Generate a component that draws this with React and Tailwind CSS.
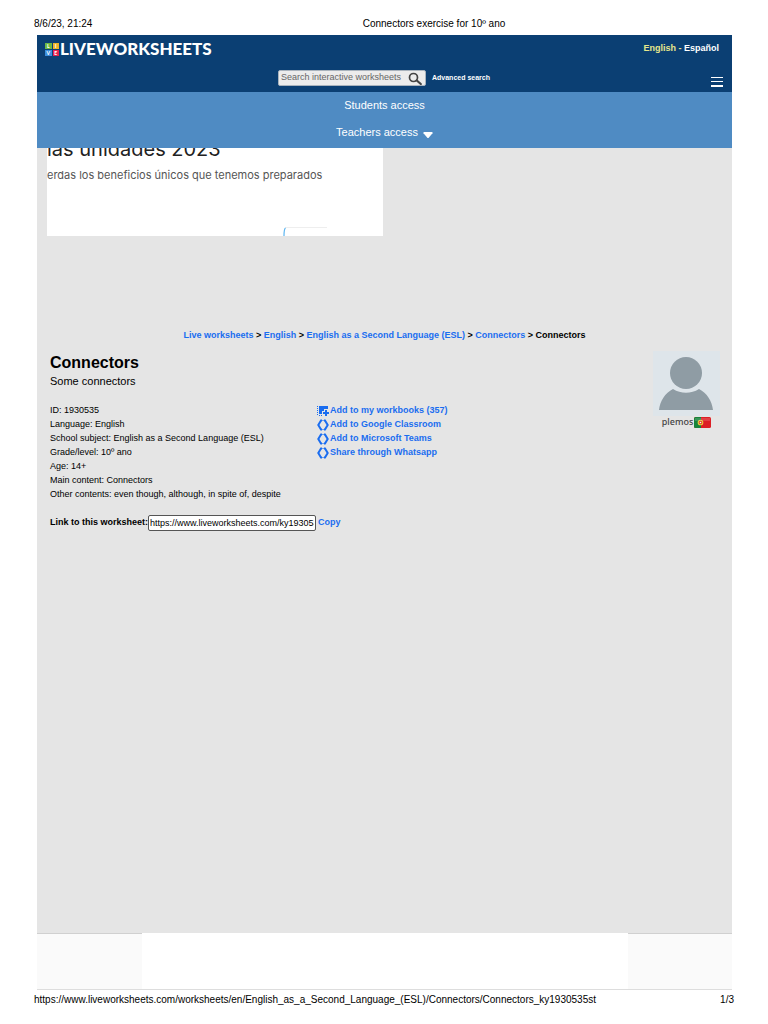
import { useState } from 'react';

const crumbs = ['Live worksheets', 'English', 'English as a Second Language (ESL)', 'Connectors'];

const details = [
  ['ID', '1930535'],
  ['Language', 'English'],
  ['School subject', 'English as a Second Language (ESL)'],
  ['Grade/level', '10º ano'],
  ['Age', '14+'],
  ['Main content', 'Connectors'],
  ['Other contents', 'even though, although, in spite of, despite'],
];

const actions = [
  { label: 'Add to my workbooks (357)', icon: 'workbook' },
  { label: 'Add to Google Classroom', icon: 'share' },
  { label: 'Add to Microsoft Teams', icon: 'share' },
  { label: 'Share through Whatsapp', icon: 'share' },
];

const LogoMark = () => (
  <div className="grid grid-cols-2 gap-px w-[14px] h-3 font-['Lato',sans-serif] font-black text-[5px] leading-[6px] text-white text-center">
    <span className="bg-[#6cb744]">L</span>
    <span className="bg-[#f0b429]">I</span>
    <span className="bg-[#3b8ede]">V</span>
    <span className="bg-[#e5244f]">E</span>
  </div>
);

const WorkbookIcon = () => (
  <svg viewBox="0 0 12 12" className="w-3 h-3 mt-[2px] shrink-0" fill="#1a6df0">
    <path d="M0 1h1v1H0zM0 3h1v1H0zM0 5h1v1H0zM0 7h1v1H0zM0 9h1v1H0z" />
    <path d="M2 1h9v3H7v2H5v3H2z" />
    <path d="M2 10h1v1H2zM4 10h1v1H4z" />
    <path d="M8 5h2v2h2v2h-2v2H8V9H6V7h2z" />
  </svg>
);

const ShareIcon = () => (
  <svg viewBox="0 0 12 12" className="w-3 h-3 mt-[2px] shrink-0" fill="none" stroke="#1a6df0" strokeWidth="2">
    <path d="M5 1.500H4L1.300 6 4 10.500h1M7 1.500h1L10.700 6 8 10.500H7" />
    <path d="M5 1.500h2M5 10.500h2" strokeWidth="1" opacity="0.600" />
  </svg>
);

const Avatar = () => (
  <svg viewBox="0 0 67 65" className="w-[67px] h-[65px]" role="img" aria-label="plemos">
    <rect width="67" height="65" fill="#dee5ea" />
    <circle cx="33" cy="22" r="16" fill="#8f9ca4" />
    <path d="M6 59c1-9 6-17 14-21 8 5 18 5 26 0 8 4 13 12 14 21z" fill="#8f9ca4" />
  </svg>
);

const Flag = () => (
  <svg viewBox="0 0 17 11" className="w-[17px] h-[11px]">
    <rect width="17" height="11" rx="1.500" fill="#dc1f26" />
    <path d="M1.500 0H7v11H1.500A1.500 1.500 0 0 1 0 9.500v-8A1.500 1.500 0 0 1 1.500 0z" fill="#16843b" />
    <circle cx="6.500" cy="5.500" r="2.300" fill="#dc3a26" stroke="#e8c83c" strokeWidth="1.100" />
    <circle cx="6.500" cy="5.500" r="0.800" fill="#fff" />
    <path d="M1 1h15v3H1z" fill="#fff" opacity="0.150" />
  </svg>
);

const Header = () => (
  <header>
    <div className="h-[57px] bg-[#0b3f73] text-white pl-2 pr-[9px] pt-1">
      <div className="flex items-center justify-between h-5 pr-1">
        <a href="#home" className="flex items-center gap-px">
          <LogoMark />
          <span className="font-['Lato',sans-serif] font-black text-[17px] leading-5">LIVEWORKSHEETS</span>
        </a>
        <nav className="text-[9px] font-bold">
          <a href="#en" className="text-[#e6e68c]">English</a>
          <span className="text-[#e6e68c]"> - </span>
          <a href="#es">Español</a>
        </nav>
      </div>
      <div className="grid grid-cols-[1fr_auto_1fr] items-end mt-[11px]">
        <div className="col-start-2 flex items-center gap-[6px] mb-1">
          <form className="flex items-center w-[148px] h-4 pl-[2px] pr-[3px] bg-[#ececec] border border-[#a9b3bd] rounded-xs" onSubmit={(e) => e.preventDefault()}>
            <input aria-label="Search" placeholder="Search interactive worksheets" className="flex-1 min-w-0 text-[9px] text-[#333] placeholder:text-[#666] outline-none" />
            <button type="submit" aria-label="Search">
              <svg viewBox="0 0 14 13" className="w-[14px] h-[13px]" fill="none" stroke="#444" strokeLinecap="round">
                <circle cx="5.500" cy="5.500" r="4" strokeWidth="1.700" />
                <path d="M8.800 8.500l4 3.500" strokeWidth="2.200" />
              </svg>
            </button>
          </form>
          <a href="#advanced" className="font-bold text-[7px] leading-3">Advanced search</a>
        </div>
        <button aria-label="Menu" className="justify-self-end flex flex-col gap-[3px] w-3 mb-[3px]">
          <span className="w-full h-px bg-white" />
          <span className="w-full h-px bg-white" />
          <span className="w-full h-[2px] bg-white" />
        </button>
      </div>
    </div>
    <nav className="flex flex-col items-center h-14 bg-[#4f8bc3] text-white text-[11px] leading-[27px]">
      <a href="#students">Students access</a>
      <a href="#teachers" className="flex items-center gap-[5px]">
        Teachers access
        <svg viewBox="0 0 10 6" className="w-[10px] h-[6px] mt-1"><path d="M1 0h8q1 .5.500 1.300L5.500 6h-1L.5 1.300Q0 .5 1 0z" fill="#fff" /></svg>
      </a>
    </nav>
  </header>
);

const Banner = () => (
  <div className="relative overflow-hidden w-[336px] h-[88px] ml-[10px] bg-white font-['Inter',sans-serif]">
    <p className="-mt-[11px] text-[20px] leading-6 text-[#222] whitespace-nowrap">las unidades 2023</p>
    <p className="mt-[6px] text-[11px] leading-4 text-[#555] whitespace-nowrap">erdas los beneficios únicos que tenemos preparados</p>
    <svg viewBox="0 0 44 9" className="absolute right-14 bottom-0 w-11 h-[9px]" fill="none">
      <path d="M2 .5h42" stroke="#eeeeee" />
      <path d="M2.500 1Q1 2 1 9" stroke="#5ab4f0" strokeWidth="1.200" />
    </svg>
  </div>
);

export default function App() {
  const [link, setLink] = useState('https://www.liveworksheets.com/ky1930535st');

  return (
    <div className="flex flex-col min-h-screen bg-white text-black font-['Liberation_Sans',Arial,sans-serif]">
      <div className="grid grid-cols-[1fr_auto_1fr] h-[35px] pt-[18px] px-[34px] text-[10px] leading-3">
        <span>8/6/23, 21:24</span>
        <span className="ml-[100px]">Connectors exercise for 10º ano</span>
      </div>

      <div className="flex flex-col flex-1 ml-[37px] mr-9 bg-[#e5e5e5]">
        <Header />
        <Banner />

        <nav className="mt-[93px] text-center text-[9px] leading-3 font-bold">
          {crumbs.map((c) => (
            <span key={c}><a href="#crumb" className="text-[#1a6df0]">{c}</a> &gt; </span>
          ))}
          Connectors
        </nav>

        <main className="flex justify-between items-start mt-[10px] pl-[13px] pr-3">
          <div className="pt-[2px]">
            <h1 className="font-bold text-[16px] leading-5">Connectors</h1>
            <p className="text-[11px] leading-4">Some connectors</p>
            <div className="flex mt-[14px] text-[9px] leading-[14px]">
              <ul className="w-[267px]">
                {details.map(([k, v]) => <li key={k}>{k}: {v}</li>)}
              </ul>
              <ul className="font-bold">
                {actions.map((a) => (
                  <li key={a.label}>
                    <a href="#action" className="flex items-center gap-px text-[#1a6df0]">
                      {a.icon === 'workbook' ? <WorkbookIcon /> : <ShareIcon />}
                      {a.label}
                    </a>
                  </li>
                ))}
              </ul>
            </div>
            <div className="flex items-center mt-[14px] text-[9px]">
              <label htmlFor="link" className="font-bold">Link to this worksheet:</label>
              <input id="link" value={link} onChange={(e) => setLink(e.target.value)} className="w-[168px] h-4 mr-[2px] px-px bg-white border border-[#555] rounded-xs" />
              <button className="font-bold text-[#1a6df0]">Copy</button>
            </div>
          </div>
          <div className="flex flex-col items-center">
            <Avatar />
            <p className="flex items-center gap-px text-[9px] leading-3 font-medium text-[#444] font-['Noto_Sans',sans-serif]">
              plemos <Flag />
            </p>
          </div>
        </main>

        <div className="flex mt-auto h-[57px] border-b border-[#ddd] bg-white">
          <div className="flex-1 bg-[#fafafa] border-t border-[#d0d0d0]" />
          <div className="w-[486px]" />
          <div className="flex-1 bg-[#fafafa] border-t border-[#d0d0d0]" />
        </div>
      </div>

      <footer className="flex justify-between h-[34px] pt-1 px-[34px] text-[10px] leading-3">
        <span>https://www.liveworksheets.com/worksheets/en/English_as_a_Second_Language_(ESL)/Connectors/Connectors_ky1930535st</span>
        <span>1/3</span>
      </footer>
    </div>
  );
}
